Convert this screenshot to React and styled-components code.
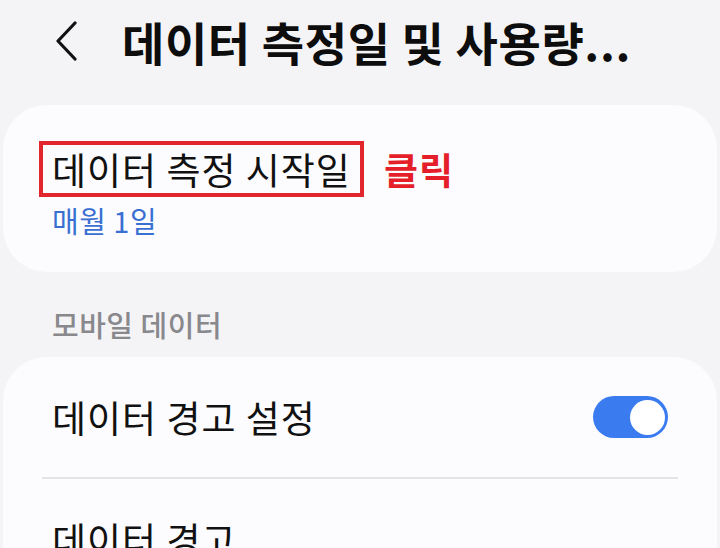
import React from "react";
import styled, { createGlobalStyle } from "styled-components";

const Global = createGlobalStyle`
  html, body { margin: 0; padding: 0; background: #f4f4f6; }
  body {
    font-family: "Noto Sans CJK KR", "Noto Sans", sans-serif;
    color: #111;
    overflow: hidden;
  }
`;

const Page = styled.div`
  width: 720px;
  height: 548px;
  overflow: hidden;
  background: #f4f4f6;
`;

const Header = styled.header`
  height: 82px;
  display: flex;
  align-items: center;
  padding-left: 56px;
`;

const BackButton = styled.button`
  display: flex;
  align-items: center;
  border: 0;
  background: none;
  padding: 0;
  width: 22px;
  height: 40px;
  color: #111;
`;

const Title = styled.h1`
  margin: 0 0 0 44px;
  font-size: 46px;
  font-weight: 700;
  letter-spacing: 0.6px;
  white-space: nowrap;
  color: #0d0d0d;
`;

const Card = styled.section`
  margin: ${(p) => p.$top || 0}px 3px 0;
  background: #fcfcfe;
  border-radius: 44px;
  padding: ${(p) => p.$padding || "0"};
`;

const TitleRow = styled.div`
  display: flex;
  align-items: center;
`;

const Highlight = styled.div`
  border: 4px solid #e2262d;
  padding: 0 9px;
  font-size: 37px;
  letter-spacing: 1px;
  line-height: 48px;
  white-space: nowrap;
`;

const ClickLabel = styled.span`
  margin-left: 20px;
  font-size: 37px;
  font-weight: 700;
  letter-spacing: 1px;
  color: #e51f2a;
`;

const SubText = styled.div`
  margin: 5px 0 0 13px;
  font-size: 29px;
  font-weight: 400;
  letter-spacing: 0.5px;
  line-height: 36px;
  color: #3a6fd2;
`;

const SectionLabel = styled.h2`
  margin: 0;
  padding: 20px 52px 0;
  line-height: 65px;
  font-size: 29px;
  letter-spacing: 0.5px;
  font-weight: 500;
  color: #88888d;
`;

const Row = styled.div`
  height: 120px;
  display: flex;
  align-items: center;
  justify-content: space-between;
  padding: 0 49px;
  font-size: 37px;
  letter-spacing: 1px;
`;

const Divider = styled.div`
  height: 2px;
  margin: 0 39px;
  background: #e4e4e7;
`;

const Toggle = styled.div`
  width: 75px;
  height: 42px;
  border-radius: 21px;
  background: ${(p) => (p.$on ? "#3b7bf0" : "#c6c6ca")};
  display: flex;
  align-items: center;
  justify-content: ${(p) => (p.$on ? "flex-end" : "flex-start")};
  padding: 0 3px;
  box-sizing: border-box;
`;

const Knob = styled.div`
  width: 35px;
  height: 35px;
  border-radius: 50%;
  background: #ffffff;
`;

export default function App() {
  return (
    <Page>
      <Global />
      <Header>
        <BackButton aria-label="뒤로">
          <svg width="22" height="40" viewBox="0 0 22 40" fill="none">
            <polyline
              points="19,2 2,20 19,38"
              stroke="#111"
              strokeWidth="3.2"
              strokeLinecap="round"
              strokeLinejoin="round"
            />
          </svg>
        </BackButton>
        <Title>데이터 측정일 및 사용량...</Title>
      </Header>

      <Card $top={23} $padding="36px 36px 34px">
        <TitleRow>
          <Highlight>데이터 측정 시작일</Highlight>
          <ClickLabel>클릭</ClickLabel>
        </TitleRow>
        <SubText>매월 1일</SubText>
      </Card>

      <SectionLabel>모바일 데이터</SectionLabel>

      <Card>
        <Row>
          <span>데이터 경고 설정</span>
          <Toggle $on>
            <Knob />
          </Toggle>
        </Row>
        <Divider />
        <Row>
          <span>데이터 경고</span>
        </Row>
      </Card>
    </Page>
  );
}
